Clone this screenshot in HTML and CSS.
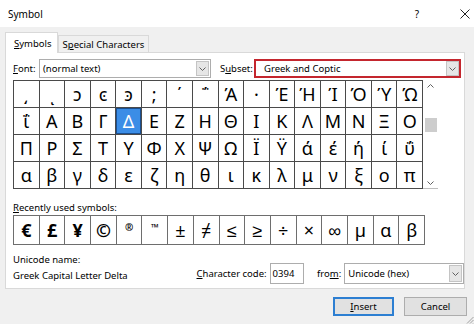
FILE: index.html
```html
<!DOCTYPE html>
<html lang="en">
<head>
  <meta charset="UTF-8">
  <title>Symbol</title>
  <link rel="stylesheet" href="styles.css">
</head>
<body>
  <div class="titlebar">
    <span class="title">Symbol</span>
    <span class="help">?</span>
    <svg class="close" width="10" height="10" viewBox="0 0 10 10"><path d="M0.5 0.5 L9.5 9.5 M9.5 0.5 L0.5 9.5" stroke="#222" stroke-width="1" fill="none"/></svg>
  </div>

  <div class="tabs">
    <div class="tab active"><u>S</u>ymbols</div>
    <div class="tab">S<u>p</u>ecial Characters</div>
  </div>

  <div class="panel">
    <div class="select-row">
      <label class="lbl-font"><u>F</u>ont:</label>
      <div class="combo combo-font">
        <span>(normal text)</span>
        <span class="arrow"><svg width="7" height="4" viewBox="0 0 7 4"><path d="M0.5 0.5 L3.5 3.5 L6.5 0.5" stroke="#606060" fill="none"/></svg></span>
      </div>
      <label class="lbl-subset">S<u>u</u>bset:</label>
      <div class="combo combo-subset">
        <span>Greek and Coptic</span>
        <span class="arrow"><svg width="7" height="4" viewBox="0 0 7 4"><path d="M0.5 0.5 L3.5 3.5 L6.5 0.5" stroke="#606060" fill="none"/></svg></span>
      </div>
    </div>

    <div class="grid-wrap">
      <div class="grid">
        <div class="cell">͵</div><div class="cell">ͺ</div><div class="cell">ͻ</div><div class="cell">ͼ</div>
        <div class="cell">ͽ</div><div class="cell">;</div><div class="cell">΄</div><div class="cell">΅</div>
        <div class="cell">Ά</div><div class="cell">·</div><div class="cell">Έ</div><div class="cell">Ή</div>
        <div class="cell">Ί</div><div class="cell">Ό</div><div class="cell">Ύ</div><div class="cell">Ώ</div>

        <div class="cell">ΐ</div><div class="cell">Α</div><div class="cell">Β</div><div class="cell">Γ</div>
        <div class="cell selected">Δ</div><div class="cell">Ε</div><div class="cell">Ζ</div><div class="cell">Η</div>
        <div class="cell">Θ</div><div class="cell">Ι</div><div class="cell">Κ</div><div class="cell">Λ</div>
        <div class="cell">Μ</div><div class="cell">Ν</div><div class="cell">Ξ</div><div class="cell">Ο</div>

        <div class="cell">Π</div><div class="cell">Ρ</div><div class="cell">Σ</div><div class="cell">Τ</div>
        <div class="cell">Υ</div><div class="cell">Φ</div><div class="cell">Χ</div><div class="cell">Ψ</div>
        <div class="cell">Ω</div><div class="cell">Ϊ</div><div class="cell">Ϋ</div><div class="cell">ά</div>
        <div class="cell">έ</div><div class="cell">ή</div><div class="cell">ί</div><div class="cell">ΰ</div>

        <div class="cell">α</div><div class="cell">β</div><div class="cell">γ</div><div class="cell">δ</div>
        <div class="cell">ε</div><div class="cell">ζ</div><div class="cell">η</div><div class="cell">θ</div>
        <div class="cell">ι</div><div class="cell">κ</div><div class="cell">λ</div><div class="cell">μ</div>
        <div class="cell">ν</div><div class="cell">ξ</div><div class="cell">ο</div><div class="cell">π</div>
      </div>
      <div class="scrollbar">
        <svg width="7" height="4" viewBox="0 0 7 4"><path d="M0.5 3.5 L3.5 0.5 L6.5 3.5" stroke="#606060" fill="none"/></svg>
        <div class="thumb"></div>
        <svg class="down" width="7" height="4" viewBox="0 0 7 4"><path d="M0.5 0.5 L3.5 3.5 L6.5 0.5" stroke="#606060" fill="none"/></svg>
      </div>
    </div>

    <div class="recent-label"><u>R</u>ecently used symbols:</div>
    <div class="recent">
      <div class="cell strong">€</div><div class="cell strong">£</div><div class="cell strong">¥</div><div class="cell strong">©</div>
      <div class="cell small">®</div><div class="cell small">™</div><div class="cell">±</div><div class="cell">≠</div>
      <div class="cell">≤</div><div class="cell">≥</div><div class="cell">÷</div><div class="cell">×</div>
      <div class="cell">∞</div><div class="cell">µ</div><div class="cell">α</div><div class="cell">β</div>
    </div>

    <div class="info">
      <div class="name">
        <div>Unicode name:</div>
        <div>Greek Capital Letter Delta</div>
      </div>
      <label class="lbl-code"><u>C</u>haracter code:</label>
      <div class="code">0394</div>
      <label class="lbl-from">fro<u>m</u>:</label>
      <div class="combo combo-from">
        <span>Unicode (hex)</span>
        <span class="arrow"><svg width="7" height="4" viewBox="0 0 7 4"><path d="M0.5 0.5 L3.5 3.5 L6.5 0.5" stroke="#606060" fill="none"/></svg></span>
      </div>
    </div>
  </div>

  <div class="buttons">
    <button class="btn default"><u>I</u>nsert</button>
    <button class="btn">Cancel</button>
  </div>

  <svg class="grip" width="8" height="8" viewBox="0 0 8 8"><path d="M7.5 1 L1 7.5 M7.5 4 L4 7.5 M7.5 7 L7 7.5" stroke="#a0a0a0" fill="none"/></svg>
</body>
</html>
```

FILE: styles.css
```css
body {
  width: 474px;
  height: 324px;
  margin: 0;
  overflow: hidden;
  background: #f0f0f0;
  color: #000;
  font-family: "Segoe UI", "Noto Sans", sans-serif;
  font-size: 9.5px;
  white-space: nowrap;
}

u {
  text-decoration-thickness: 1px;
  text-underline-offset: 1px;
}

/* title bar */
.titlebar {
  height: 27px;
  display: flex;
  align-items: center;
  padding: 0 4px 0 8px;
  background: #ffffff;
  font-size: 10px;
}

.title {
  flex: 1;
}

.help {
  margin-right: 41px;
}

/* tabs */
.tabs {
  height: 26px;
  display: flex;
  align-items: flex-end;
  padding-left: 5px;
  box-sizing: border-box;
}

.tab {
  box-sizing: border-box;
  height: 17px;
  margin-bottom: 1px;
  border: 1px solid #d9d9d9;
  border-bottom: none;
  background: #f0f0f0;
  display: flex;
  align-items: center;
  justify-content: center;
  width: 91px;
}

.tab.active {
  position: relative;
  z-index: 1;
  width: 53px;
  height: 21px;
  margin-bottom: 0;
  background: #ffffff;
  justify-content: flex-start;
  padding-left: 8px;
}

/* main panel */
.panel {
  box-sizing: border-box;
  width: 460px;
  height: 237px;
  margin: -1px 0 0 5px;
  padding: 0 0 0 7px;
  border: 1px solid #d9d9d9;
  background: #ffffff;
}

.select-row {
  display: flex;
  align-items: center;
  height: 19px;
  margin-top: 6px;
}

.lbl-font {
  width: 26px;
}

.lbl-subset {
  width: 34px;
  margin-left: 9px;
}

.combo {
  box-sizing: border-box;
  height: 19px;
  display: flex;
  align-items: center;
  padding-left: 3px;
  border: 1px solid #adadad;
  background: #ffffff;
}

.combo .arrow {
  box-sizing: border-box;
  width: 13px;
  height: 15px;
  margin-left: auto;
  margin-right: 1px;
  border: 1px solid #c4c4c4;
  background: #e6e6e6;
  display: flex;
  align-items: center;
  justify-content: center;
}

.combo-font {
  width: 172px;
}

.combo-subset {
  width: 207px;
  padding-left: 8px;
  border: 2px solid #c4262e;
}

.combo-subset .arrow {
  margin-right: 0;
}

/* symbol grid */
.grid-wrap {
  display: flex;
  margin-top: 2px;
}

.grid {
  box-sizing: border-box;
  width: 410px;
  display: grid;
  grid-template-columns: repeat(16, 1fr);
  grid-auto-rows: 26px;
  gap: 1px;
  padding: 1px;
  background: #4a4a4a;
}

.cell {
  background: #ffffff;
  display: flex;
  align-items: center;
  justify-content: center;
  font-size: 18px;
  line-height: 1;
}

.cell.selected {
  background: #3b8de6;
  color: #ffffff;
  box-shadow: inset 0 0 0 1px #1b4f8f;
}

.scrollbar {
  box-sizing: border-box;
  width: 15px;
  display: flex;
  flex-direction: column;
  align-items: center;
  padding-top: 4px;
  border-bottom: 1px solid #bdbdbd;
  background: #ffffff;
}

.thumb {
  width: 12px;
  height: 14px;
  margin-top: 30px;
  background: #cdcdcd;
}

.scrollbar .down {
  margin-top: auto;
  margin-bottom: 3px;
}

.recent-label {
  height: 15px;
  margin-top: 11px;
  line-height: 15px;
}

.recent {
  box-sizing: border-box;
  width: 412px;
  height: 30px;
  display: grid;
  grid-template-columns: repeat(16, 1fr);
  gap: 1px;
  padding: 1px;
  background: #6e6e6e;
}

.recent .strong {
  font-weight: 700;
}

.recent .small {
  font-size: 10px;
  font-weight: 700;
  align-items: flex-start;
  padding-top: 6px;
}

/* bottom info */
.info {
  display: flex;
  align-items: flex-end;
  margin-top: 7px;
}

.name {
  width: 187px;
  line-height: 16px;
}

.info label {
  margin-bottom: 4px;
}

.code {
  box-sizing: border-box;
  width: 35px;
  height: 21px;
  margin-left: 3px;
  padding-left: 2px;
  border: 1px solid #adadad;
  display: flex;
  align-items: center;
}

.lbl-from {
  margin-left: 13px;
  margin-right: 3px;
}

.combo-from {
  width: 122px;
  height: 21px;
}

.combo-from .arrow {
  height: 17px;
}

/* buttons */
.buttons {
  display: flex;
  justify-content: flex-end;
  gap: 10px;
  margin-top: 8px;
  padding-right: 7px;
}

.btn {
  box-sizing: border-box;
  width: 63px;
  height: 19px;
  padding: 0;
  border: 1px solid #adadad;
  background: #e1e1e1;
  font-family: inherit;
  font-size: 9.5px;
  color: #000;
}

.btn.default {
  width: 61px;
  border: 2px solid #2d7fd2;
}

.grip {
  position: absolute;
  right: 0;
  bottom: 0;
}
```
